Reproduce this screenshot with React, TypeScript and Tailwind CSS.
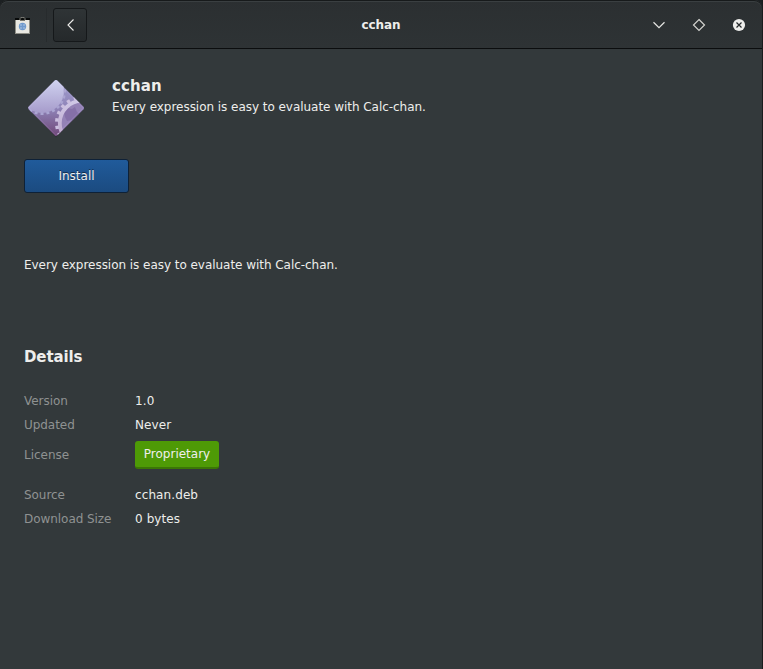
import React from "react";

function BagIcon() {
  return (
    <svg width="15" height="17" viewBox="0 0 15 17" className="block">
      <path d="M0 1h15v2H0z" fill="#080a0a" />
      <path d="M5 3.500V1.500Q5 .5 7.500.5T10 1.500v2" fill="none" stroke="#85857e" strokeWidth="1" />
      <path d="M0 3h15v14H0z" fill="#8f8f87" />
      <path d="M1 3h13v13H1z" fill="#e9e8e2" />
      <path d="M5 3.500h5" stroke="#77776f" strokeWidth="1" />
      <circle cx="7.500" cy="9.500" r="3.700" fill="#6f99cc" />
      <path d="M5.500 7.500h1v1h-1zM8.500 7.500h1v1h-1zM5.500 10.500h1v1h-1zM8.500 10.500h1v1h-1z" fill="#e4edf5" />
    </svg>
  );
}

function PackageIcon() {
  const teeth = [136, 153, 170, 187, 204, 221, 238, 255];
  const smallTeeth = [-30, -15, 0, 15, 30, 45, 60, 75, 90, 105, 120];
  return (
    <svg width="64" height="64" viewBox="0 0 64 64" className="block">
      <defs>
        <linearGradient id="face" x1="0" y1="0" x2="0" y2="1">
          <stop offset="0" stopColor="#a19fd0" />
          <stop offset=".5" stopColor="#8f84b8" />
          <stop offset="1" stopColor="#6b3f70" />
        </linearGradient>
        <linearGradient id="gear" gradientUnits="userSpaceOnUse" x1="0" y1="6" x2="0" y2="42">
          <stop offset="0" stopColor="#cdcfee" />
          <stop offset="1" stopColor="#a093c5" />
        </linearGradient>
        <linearGradient id="ring" gradientUnits="userSpaceOnUse" x1="0" y1="22" x2="0" y2="60">
          <stop offset="0" stopColor="#d0cae8" />
          <stop offset="1" stopColor="#bfa9cd" />
        </linearGradient>
        <clipPath id="diamond">
          <path d="M30.800 4.600q1.200-1 2.400 0l26.200 26.200q1 1.200 0 2.400L33.200 59.400q-1.200 1-2.400 0L4.600 33.200q-1-1.200 0-2.400z" />
        </clipPath>
      </defs>
      <path d="M32 5l27 27-27 28L5 32z" fill="none" stroke="#202426" strokeWidth="2" opacity=".4" />
      <g clipPath="url(#diamond)">
        <path d="M0 0h64v64H0z" fill="url(#face)" />
        <circle cx="18" cy="15" r="22" fill="url(#gear)" />
        {smallTeeth.map((a) => (
          <path key={a} d="M39.500 13.500h2.500v3h-2.500z" fill="#aba5d2" transform={`rotate(${a} 18 15)`} />
        ))}
        <circle cx="58" cy="47" r="21" fill="#9482b6" />
        <path d="M40 37l4-5 4 1 3-2 2 5 4 3-5 8-4-3-5 1-2-4z" fill="#745c96" opacity=".45" />
        <circle cx="58" cy="47" r="22.200" fill="none" stroke="url(#ring)" strokeWidth="3.800" />
        {teeth.map((a) => (
          <path key={a} d="M81.500 45.300h3.500v3.400h-3.500z" fill="#cbbfdf" transform={`rotate(${a} 58 47)`} />
        ))}
        <path d="M32 4.800L59.200 32 32 59.200 4.800 32z" fill="none" stroke="#eee9ff" strokeWidth=".8" opacity=".15" />
      </g>
    </svg>
  );
}

function Header() {
  return (
    <header className="relative flex h-[49px] items-center rounded-t-lg border-b border-[#0b0d0e] bg-linear-to-b from-[#2b2f31] to-[#2e3335] pt-0.5 shadow-[inset_0_1px_0_#171a1b,inset_0_2px_0_#3a3f41]">
      <div className="ml-[15px]"><BagIcon /></div>
      <div className="ml-4 h-[34px] w-px bg-[#272b2d]" />
      <button className="ml-1.5 flex h-[34px] w-[34px] items-center justify-center rounded-[3px] border border-[#15181a] bg-linear-to-b from-[#2f3436] to-[#25292b]">
        <svg width="16" height="16" viewBox="0 0 16 16">
          <path d="M11.500 2.500L6 8l5.500 5.500" fill="none" stroke="#eeeeec" strokeWidth="1.1" />
        </svg>
      </button>
      <h1 className="absolute inset-x-0 top-[17px] text-center text-[12px] leading-4 font-bold tracking-[-0.1px]">cchan</h1>
      <div className="mr-[15px] ml-auto flex items-center gap-6">
        <svg width="16" height="16" viewBox="0 0 16 16"><path d="M2.500 5.300L8 10.700l5.500-5.400" fill="none" stroke="#e6e6e3" strokeWidth="1.2" /></svg>
        <svg width="16" height="16" viewBox="0 0 16 16"><path d="M8 2.500L13.500 8 8 13.500 2.500 8z" fill="none" stroke="#d3d3cf" strokeWidth="1.2" /></svg>
        <svg width="16" height="16" viewBox="0 0 16 16">
          <circle cx="8" cy="8" r="6.100" fill="#eeeeec" />
          <path d="M5.500 5.500l5 5m0-5l-5 5" stroke="#25292b" strokeWidth="1.2" />
        </svg>
      </div>
    </header>
  );
}

function Detail({ label, children }: { label: string; children: React.ReactNode }) {
  return (
    <div className="flex h-6 items-center">
      <dt className="w-[111px] tracking-[-0.05px] text-[#8f9292]">{label}</dt>
      <dd className="tracking-[0.1px]">{children}</dd>
    </div>
  );
}

export default function App() {
  return (
    <div className="h-[669px] w-[763px] overflow-hidden bg-[#191c1d] pr-px font-['DejaVu_Sans',sans-serif] text-[12px] leading-4 text-[#eeeeec]">
      <div className="h-full bg-[#33393b]">
        <div className="bg-[#1c2022]"><Header /></div>
        <main className="px-6">
          <section className="flex pt-[27px]">
            <div className="mr-6 h-16 w-16"><PackageIcon /></div>
            <div>
              <h2 className="text-[15px] leading-5 font-bold tracking-[0.1px]">cchan</h2>
              <p className="mt-[3px] tracking-[-0.04px]">Every expression is easy to evaluate with Calc-chan.</p>
            </div>
          </section>
          <button className="mt-[19px] flex h-[34px] w-[105px] items-center justify-center rounded-[3px] border border-[#0e2137] bg-linear-to-b from-[#205b9b] to-[#1b4b80] [text-shadow:0_-1px_#102b4b]">Install</button>
          <p className="mt-16 tracking-[-0.04px]">Every expression is easy to evaluate with Calc-chan.</p>
          <h2 className="mt-[74px] text-[15px] leading-5 font-bold tracking-[-0.1px]">Details</h2>
          <dl className="mt-[22px]">
            <Detail label="Version">1.0</Detail>
            <Detail label="Updated">Never</Detail>
            <div className="mt-1 mb-[14px] flex h-7 items-center">
              <dt className="w-[111px] text-[#8f9292]">License</dt>
              <dd className="flex h-7 w-[84px] justify-center rounded-[3px] border-b-2 border-[#3b7606] bg-[#4e9a06] pt-[5px]">Proprietary</dd>
            </div>
            <Detail label="Source">cchan.deb</Detail>
            <Detail label="Download Size">0 bytes</Detail>
          </dl>
        </main>
      </div>
    </div>
  );
}
